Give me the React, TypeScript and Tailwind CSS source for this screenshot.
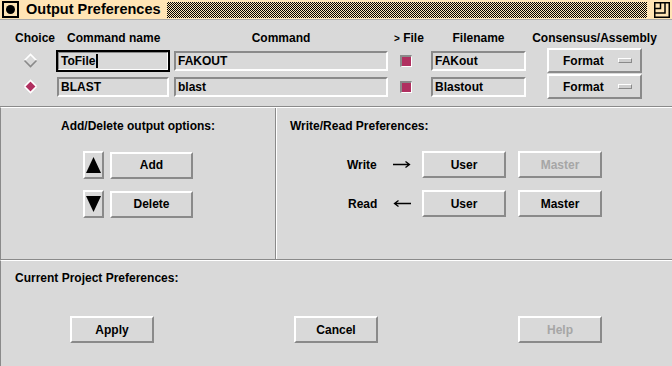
import React from "react";

const up =
  "border-2 border-t-white border-l-white border-b-[#8a8a8a] border-r-[#8a8a8a]";
const down =
  "border-2 border-t-[#8a8a8a] border-l-[#8a8a8a] border-b-white border-r-white";

function Button({
  label,
  className = "",
  disabled = false,
}: {
  label: string;
  className?: string;
  disabled?: boolean;
}) {
  return (
    <div
      className={`${up} flex h-[27px] items-center justify-center text-[12px] font-bold ${
        disabled ? "text-[#a6a6a6]" : "text-black"
      } ${className}`}
    >
      {label}
    </div>
  );
}

function Field({
  value,
  className = "",
  focused = false,
}: {
  value: string;
  className?: string;
  focused?: boolean;
}) {
  if (focused) {
    return (
      <div className={`h-[22px] border-2 border-black ${className}`}>
        <div className="flex h-full items-center border border-t-[#8a8a8a] border-l-[#8a8a8a] border-b-white border-r-white pl-[2px] text-[12px] font-bold">
          {value}
          <span className="ml-[1px] h-[14px] w-[2px] bg-black" />
        </div>
      </div>
    );
  }
  return (
    <div className={`h-[22px] p-[1px] ${className}`}>
      <div className={`${down} flex h-full items-center pl-[2px] text-[12px] font-bold`}>
        {value}
      </div>
    </div>
  );
}

function Diamond({ on }: { on: boolean }) {
  return (
    <svg width="15" height="15" viewBox="0 0 15 15">
      <polygon points="7.5,1.5 13.5,7.5 7.5,13.5 1.5,7.5" fill={on ? "#b03060" : "#d9d9d9"} />
      <path d="M1.5 7.5 L7.5 1.5 L13.5 7.5" fill="none" stroke={on ? "#ffffff" : "#ffffff"} strokeWidth="1.6" />
      <path d="M1.5 7.5 L7.5 13.5 L13.5 7.5" fill="none" stroke={on ? "#ffffff" : "#8a8a8a"} strokeWidth="1.6" />
    </svg>
  );
}

function Check() {
  return (
    <div className="h-[12px] w-[12px] border-2 border-t-[#8a8a8a] border-l-[#8a8a8a] border-b-white border-r-white border-b-[1px] border-r-[1px] bg-[#b03060]" />
  );
}

function FormatMenu() {
  return (
    <div className={`${up} flex h-[25px] w-[95px] items-center pl-[14px] text-[12px] font-bold`}>
      <span className="flex-1">Format</span>
      <span className="mr-[8px] h-[5px] w-[14px] border border-t-white border-l-white border-b-[#8a8a8a] border-r-[#8a8a8a] bg-[#cfcfcf]" />
    </div>
  );
}

function ArrowBtn({ dir }: { dir: "up" | "down" }) {
  return (
    <div className={`${up} flex h-[28px] w-[21px] items-center justify-center`}>
      <svg width="15" height="16" viewBox="0 0 15 16">
        {dir === "up" ? (
          <polygon points="7.5,0 15,16 0,16" fill="#000" />
        ) : (
          <polygon points="0,0 15,0 7.5,16" fill="#000" />
        )}
      </svg>
    </div>
  );
}

function Arrow({ right }: { right: boolean }) {
  return (
    <svg width="18" height="9" viewBox="0 0 18 9">
      {right ? (
        <path d="M0 4.5 H16.5 M12.5 1.5 L16.5 4.5 L12.5 7.5" fill="none" stroke="#000" strokeWidth="1.3" />
      ) : (
        <path d="M18 4.5 H1.5 M5.5 1.5 L1.5 4.5 L5.5 7.5" fill="none" stroke="#000" strokeWidth="1.3" />
      )}
    </svg>
  );
}

const rows = [
  { name: "ToFile", cmd: "FAKOUT", file: "FAKout", on: false, focused: true },
  { name: "BLAST", cmd: "blast", file: "Blastout", on: true, focused: false },
];

export default function App() {
  return (
    <div className="h-[366px] w-[672px] overflow-hidden bg-[#d9d9d9] font-['Liberation_Sans',Arial,sans-serif] text-black">
      {/* title bar */}
      <div className="flex h-[20px] items-center border-b border-b-[#a8a8a8] bg-[#ffe4b5]">
        <div className="ml-[2px] flex h-[17px] w-[17px] items-center justify-center border-2 border-black">
          <div className="h-[9px] w-[9px] rounded-full bg-black" />
        </div>
        <span className="ml-[7px] w-[141px] text-[14.5px] font-bold leading-none">Output Preferences</span>
        <div className="h-[16px] w-[480px] bg-[repeating-conic-gradient(#000_0%_25%,#ffe4b5_0%_50%)] bg-[length:2px_2px]" />
        <svg className="ml-[7px]" width="16" height="16" viewBox="0 0 16 16">
          <rect x="0.75" y="0.75" width="14.5" height="14.5" fill="none" stroke="#000" strokeWidth="1.5" />
          <path d="M0.75 11 H11 V0.75 M0.75 6.5 H6.5 V0.75" fill="none" stroke="#000" strokeWidth="1.5" />
        </svg>
      </div>

      {/* command table */}
      <div className="h-[87px] border-b border-b-[#8a8a8a] pt-[8px]">
        <div className="flex h-[20px] items-center text-[12px] font-bold">
          <div className="w-[56px] pl-[15px]">Choice</div>
          <div className="w-[117px] pl-[11px]">Command name</div>
          <div className="w-[216px] text-center">Command</div>
          <div className="w-[41px] pl-[5px]">
            <span className="text-[10px]">&gt;</span> File
          </div>
          <div className="w-[97px] text-center">Filename</div>
          <div className="ml-[20px] flex w-[95px] justify-center whitespace-nowrap">Consensus/Assembly</div>
        </div>
        <div className="flex flex-col gap-[1px]">
          {rows.map((r) => (
            <div key={r.name} className="flex h-[25px] items-center">
              <div className="flex w-[56px] pl-[23px]">
                <Diamond on={r.on} />
              </div>
              <Field value={r.name} focused={r.focused} className="w-[114px]" />
              <Field value={r.cmd} className="ml-[3px] w-[216px]" />
              <div className="flex w-[41px] pl-[11px]">
                <Check />
              </div>
              <Field value={r.file} className="w-[97px]" />
              <div className="ml-[20px]">
                <FormatMenu />
              </div>
            </div>
          ))}
        </div>
      </div>

      {/* add/delete + write/read */}
      <div className="flex h-[153px] border-t border-t-white border-b border-b-[#8a8a8a] border-l border-l-[#8a8a8a]">
        <div className="flex w-[275px] flex-col items-center border-r border-r-[#8a8a8a] pt-[11px]">
          <div className="text-[12px] font-bold leading-[14px]">Add/Delete output options:</div>
          <div className="mt-[18px] flex flex-col gap-[11px]">
            <div className="flex items-center gap-[6px]">
              <ArrowBtn dir="up" />
              <Button label="Add" className="w-[83px]" />
            </div>
            <div className="flex items-center gap-[6px]">
              <ArrowBtn dir="down" />
              <Button label="Delete" className="w-[83px]" />
            </div>
          </div>
        </div>
        <div className="flex flex-1 flex-col border-l border-l-white pt-[11px]">
          <div className="pl-[13px] text-[12px] font-bold leading-[14px]">Write/Read Preferences:</div>
          <div className="mt-[18px] flex flex-col gap-[12px] pl-[70px]">
            <div className="flex items-center">
              <span className="w-[46px] text-[12px] font-bold">Write</span>
              <Arrow right />
              <Button label="User" className="ml-[11px] w-[84px]" />
              <Button label="Master" disabled className="ml-[12px] w-[84px]" />
            </div>
            <div className="flex items-center">
              <span className="w-[46px] pl-[1px] text-[12px] font-bold">Read</span>
              <Arrow right={false} />
              <Button label="User" className="ml-[11px] w-[84px]" />
              <Button label="Master" className="ml-[12px] w-[84px]" />
            </div>
          </div>
        </div>
      </div>

      {/* current project */}
      <div className="h-[106px] border-t border-t-white border-l border-l-[#8a8a8a] pt-[10px]">
        <div className="pl-[14px] text-[12px] font-bold leading-[14px]">Current Project Preferences:</div>
        <div className="mt-[31px] flex gap-[140px] pl-[69px]">
          <Button label="Apply" className="w-[84px]" />
          <Button label="Cancel" className="w-[84px]" />
          <Button label="Help" disabled className="w-[84px]" />
        </div>
      </div>
    </div>
  );
}
